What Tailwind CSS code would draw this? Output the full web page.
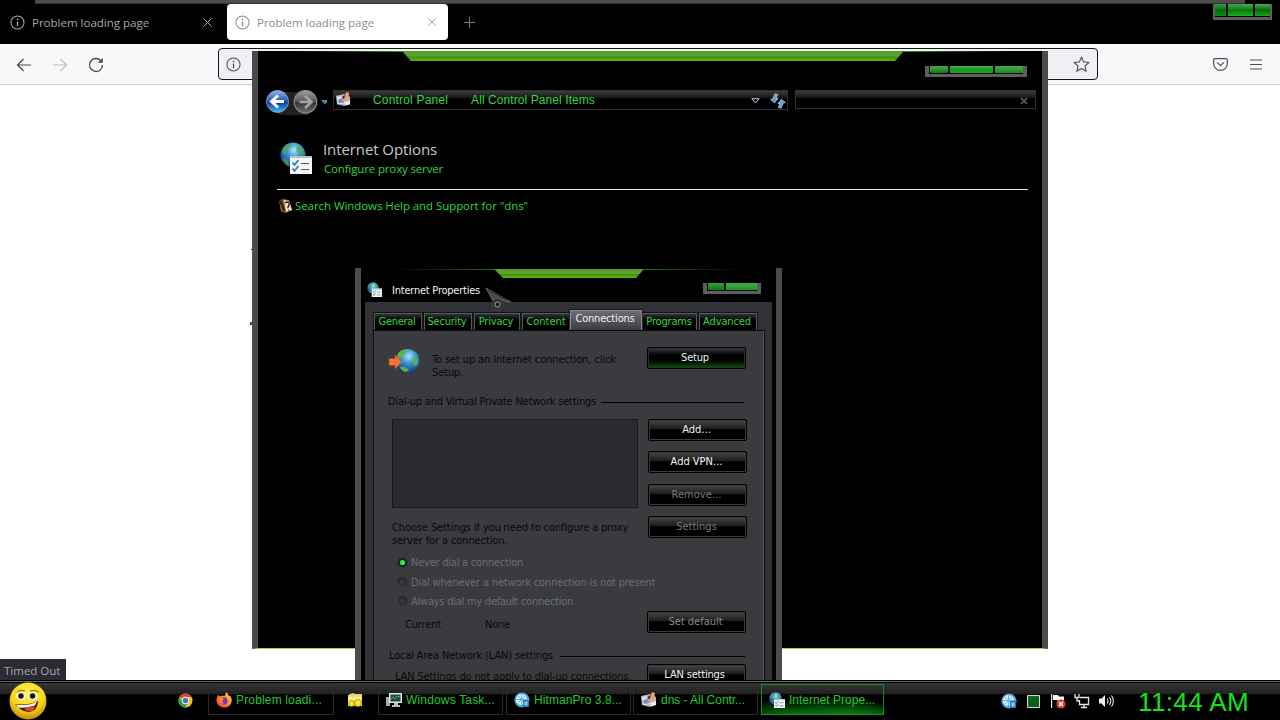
<!DOCTYPE html>
<html lang="en">
<head>
<meta charset="utf-8">
<title>Desktop</title>
<script src="https://cdn.jsdelivr.net/npm/@tailwindcss/browser@4"></script>
</head>
<body class="w-[1280px] h-[720px] overflow-hidden bg-black">
<svg class="absolute size-0">
  <defs>
    <radialGradient id="globe" cx=".55" cy=".3" r=".8"><stop offset="0" stop-color="#b5e4f8"/><stop offset=".35" stop-color="#3d9bd6"/><stop offset=".75" stop-color="#1c4c9c"/><stop offset="1" stop-color="#0b2758"/></radialGradient>
    <linearGradient id="blueBtn" x1="0" y1="0" x2="0" y2="1"><stop offset="0" stop-color="#8fb4e4"/><stop offset=".45" stop-color="#2b5dbb"/><stop offset=".55" stop-color="#123a9c"/><stop offset="1" stop-color="#38c4ff"/></linearGradient>
    <linearGradient id="grayBtn" x1="0" y1="0" x2="0" y2="1"><stop offset="0" stop-color="#a0a0a0"/><stop offset=".45" stop-color="#5c5c5c"/><stop offset=".55" stop-color="#363636"/><stop offset="1" stop-color="#6c6c6c"/></linearGradient>
    <linearGradient id="trim" x1="0" y1="0" x2="0" y2="1"><stop offset="0" stop-color="#4f9c25"/><stop offset=".5" stop-color="#5fa238"/><stop offset=".6" stop-color="#3f8f08"/><stop offset="1" stop-color="#58bd12"/></linearGradient>
    <radialGradient id="smile" cx=".5" cy=".3" r=".75"><stop offset="0" stop-color="#fff35a"/><stop offset=".6" stop-color="#f5d416"/><stop offset="1" stop-color="#b87e05"/></radialGradient>
    <linearGradient id="fox" x1="1" y1="0" x2="0" y2="1"><stop offset="0" stop-color="#ffe14a"/><stop offset=".5" stop-color="#ff8a1f"/><stop offset="1" stop-color="#f0245e"/></linearGradient>
    <symbol id="info" viewBox="0 0 16 16"><circle cx="8" cy="8" r="7" fill="none" stroke="currentColor" stroke-width="1.1"/><path d="M8 7v5" stroke="currentColor" stroke-width="1.4"/><circle cx="8" cy="4.6" r=".9" fill="currentColor"/></symbol>
    <symbol id="inetopt" viewBox="0 0 32 32"><circle cx="13" cy="13" r="12.5" fill="url(#globe)"/><path d="M2 8c3-5 7-7 9-6 2 2-1 4-3 5s-1 4-3 5-3-1-3-4zM17 3c4 1 6 4 7 8l-4 2-4-4zM3 17c4-1 6 2 6 7-3-1-5-4-6-7z" fill="#56a83c" opacity=".7"/><path d="M10 14h22v18H10z" fill="#f4f6f8"/><path d="M10 14h22v2H10z" fill="#b9c0c8"/><path d="M21 21.500h8M21 27.500h8" stroke="#555" stroke-width="1.200"/><path d="M12.500 20.500l2 2.500 4-5M12.500 26.500l2 2.500 4-5" fill="none" stroke="#1d7fae" stroke-width="1.700"/></symbol>
    <symbol id="cpl" viewBox="0 0 16 16"><path d="M0 4l9-2 6 3v8l-6 2-8-2z" fill="#b9b4b4"/><path d="M1 5l8-1 1 8-8 1z" fill="#dfe6f0"/><path d="M2 9l4-3 3 5-6 1z" fill="#8089b0"/><path d="M6 5l6-3 1 2-5 4z" fill="#4d3030"/><path d="M11 0l3 1-1 6-4 3-1-1z" fill="#f0a070"/><path d="M9 11l6-2v4l-5 1z" fill="#f3ece8"/></symbol>
    <symbol id="hit" viewBox="0 0 16 16"><circle cx="8" cy="8" r="7.600" fill="#4ea5dc"/><circle cx="7.500" cy="7.500" r="5.600" fill="#d9effb"/><path d="M7.500 2v11M2 7.500h11M3.600 3.600l8 8M11.500 3.500l-8 8" stroke="#69b3e2" stroke-width="1"/><path d="M9 8h6v7H9z" fill="#2477bd"/><path d="M10.500 9.500h3v4h-3z" fill="#8fd0f4"/></symbol>
  </defs>
</svg>

<div class="flex h-[720px] w-[1280px] flex-col">
  <main class="relative h-[680px] w-full overflow-hidden bg-white">

    <!-- Browser -->
    <section class="flex h-full flex-col">
      <div class="h-1 bg-black pr-[35px] pl-[35px]"><div class="h-full border-b border-[#333] bg-[#4d4d4d]"></div></div>
      <div class="flex h-10 bg-black font-['Open_Sans','Noto_Sans',sans-serif] text-[11.5px] tracking-[0px]">
        <div class="flex h-9 w-[227px] items-center pr-[15px] pl-[10px] text-[#a9a9a9]">
          <svg class="mr-[7px] size-[15px]"><use href="#info"/></svg>
          <span class="flex-1 pt-[2px] whitespace-nowrap">Problem loading page</span>
          <svg class="size-[9px]" viewBox="0 0 9 9"><path d="M.5.5l8 8M8.500.5l-8 8" stroke="#b5b5b5" stroke-width="1"/></svg>
        </div>
        <div class="flex h-9 w-[221px] items-center rounded bg-white pr-[12px] pl-[8px] text-[#8d8d8d]">
          <svg class="mr-[7px] size-[15px]"><use href="#info"/></svg>
          <span class="flex-1 pt-[2px] whitespace-nowrap">Problem loading page</span>
          <svg class="size-[8px]" viewBox="0 0 9 9"><path d="M.5.5l8 8M8.500.5l-8 8" stroke="#9a9a9a" stroke-width="1"/></svg>
        </div>
        <div class="flex h-9 items-center pl-[16px]"><svg class="size-[11px]" viewBox="0 0 11 11"><path d="M5.500 0v11M0 5.500h11" stroke="#7b7b7b"/></svg></div>
      </div>
      <div class="flex h-[41px] items-center border-b border-[#cfcfd2] bg-[#f9f9fb] text-[#4a4a52]">
        <svg class="mt-px ml-[16px] h-[14px] w-[15px]" viewBox="0 0 15 14" fill="none" stroke="#45454d" stroke-width="1.200"><path d="M15 7H1.500M7.500 1l-6 6 6 6"/></svg>
        <svg class="mt-px ml-[22px] h-[14px] w-[15px]" viewBox="0 0 15 14" fill="none" stroke="#bdbdc0" stroke-width="1.200"><path d="M0 7h13.500M7.500 1l6 6-6 6"/></svg>
        <svg class="mt-px ml-[20px] size-[16px]" viewBox="0 0 16 16" fill="none" stroke="#45454d" stroke-width="1.300"><path d="M12.800 3.600A6.500 6.500 0 1 0 14.500 8"/><path d="M14.800.8v5h-5z" fill="#45454d" stroke="none"/></svg>
        <div class="ml-[114px] flex h-8 w-[880px] items-center justify-between rounded border border-[#15141a] bg-[#f0f0f4] px-[7px]">
          <svg class="size-[15px]"><use href="#info"/></svg>
          <svg class="size-[17px]" viewBox="0 0 16 16" fill="none" stroke="#55555d" stroke-width="1.100" stroke-linejoin="round"><path d="M8 1l2 4.600 5 .5-3.800 3.300 1.200 5L8 11.700l-4.400 2.700 1.200-5L1 6.100l5-.5z"/></svg>
        </div>
        <svg class="ml-[115px] h-[13px] w-[15px]" viewBox="0 0 15 13" fill="none" stroke="#4f4f57" stroke-width="1.200" stroke-linejoin="round" stroke-linecap="round"><path d="M2 .6h11q1.400 0 1.400 1.400v3.500a6.900 6.900 0 0 1-13.800 0V2Q.6.600 2 .6zM4.300 4.600l3.200 3 3.200-3"/></svg>
        <svg class="ml-[22px] h-[11px] w-[12px]" viewBox="0 0 12 11"><path d="M0 1h12M0 5.500h12M0 10h12" stroke="#4f4f57" stroke-width="1.100"/></svg>
      </div>
      <div class="flex flex-1 items-end bg-white">
        <div class="flex h-[21px] w-[66px] items-center bg-[#2b2b33] pt-[2px] pl-1 font-['Open_Sans','Noto_Sans',sans-serif] text-[11.5px] text-[#a5a5a8]">Timed Out</div>
      </div>
    </section>
    <i class="absolute top-[249px] left-[251px] h-px w-1 bg-[#333]"></i>
    <i class="absolute top-[322px] left-[250px] h-[3px] w-1 bg-[#444]"></i>

    <!-- Browser caption buttons -->
    <div class="absolute top-[4px] left-[1213px] flex h-[16px] w-[59px] gap-[2px] border-x-2 border-b-[3px] border-[#5e5e5e] bg-black pb-px">
      <i class="w-[11px] bg-linear-to-b from-[#3f9a45] via-[#036b09] to-[#0a8f12]"></i>
      <i class="flex-1 bg-linear-to-b from-[#4aa850] via-[#047a0a] to-[#17b31d]"></i>
      <i class="w-[15px] bg-linear-to-b from-[#4aa850] via-[#036b09] to-[#17a31d]"></i>
    </div>

    <!-- Control Panel window -->
    <section class="absolute top-[51px] left-[252px] flex h-[598px] w-[796px] flex-col border-x-[6px] border-b border-x-[#4b4b4b] border-b-[#b8cf3a] bg-black">
      <div class="flex h-[39px] justify-between">
        <div class="h-px w-[144px] bg-linear-to-r from-black to-[#3f8f20]"></div>
        <svg class="h-[10px] w-[502px]" viewBox="0 0 502 10" preserveAspectRatio="none"><path d="M0 0h502l-9 10H9z" fill="url(#trim)"/></svg>
        <div class="h-px w-[138px] bg-linear-to-l from-black to-[#3f8f20]"></div>
      </div>
      <div class="flex h-[22px] items-start pl-[8px]">
        <svg class="h-[25px] w-[61px] shrink-0" viewBox="0 0 61 25"><path d="M12 2h30l6 10-6 13H12z" fill="#222"/><circle cx="11.500" cy="11.500" r="11" fill="url(#blueBtn)" stroke="#8fa8cc" stroke-width=".8"/><path d="M12 5.500l-6.500 6 6.500 6M6 11.500h12" fill="none" stroke="#fff" stroke-width="3"/><circle cx="39.500" cy="11.800" r="11.300" fill="url(#grayBtn)" stroke="#8a8a8a" stroke-width="1.200"/><path d="M39 6l6.500 6-6.500 6M33.500 12h11" fill="none" stroke="#a0a3a3" stroke-width="2.600"/><path d="M55 10h8l-4 4.500z" fill="#3a90b8"/></svg>
        <div class="ml-[6px] flex h-[20px] w-[455px] items-start border border-[#2e2e2e] bg-linear-to-b from-[#3c3c3c] from-0% via-[#151515] via-40% to-black to-45% font-['Liberation_Sans',Arial,sans-serif] text-[12px] leading-[18px] text-[#2fd83c]">
          <svg class="mt-px ml-[2px] size-[15px]"><use href="#cpl"/></svg>
          <span class="ml-[22px] tracking-[0.18px]">Control Panel</span>
          <span class="ml-[23px] tracking-[0.08px]">All Control Panel Items</span>
          <svg class="mt-[7px] ml-auto h-[6px] w-[9px]" viewBox="0 0 9 6"><path d="M.8.700h7.400L4.500 5z" fill="#111" stroke="#c3bdf0"/></svg>
          <svg class="mt-[2px] mr-px ml-[10px] size-[16px]" viewBox="0 0 16 16" fill="#5b9bd0" stroke="#b9d5ec" stroke-width=".8" stroke-linejoin="round"><path d="M5 .8l2.800.7-2 4H8L4.500 9.800.6 6.300h2z"/><path d="M11 15.200l-2.800-.7 2-4H8l3.500-4.300 3.900 3.500h-2z"/></svg>
        </div>
        <div class="ml-[7px] flex h-[19px] w-[241px] items-center justify-end border border-[#333] bg-linear-to-b from-[#3c3c3c] from-0% via-[#151515] via-40% to-black to-45% pr-[7px]">
          <svg class="mt-[3px] size-[8px]" viewBox="0 0 8 8"><path d="M1 1l6 6M7 1L1 7" stroke="#59617f" stroke-width="1.700"/></svg>
        </div>
      </div>
      <div class="mt-[28px] flex h-[49px] pl-[22px] font-['Open_Sans','Noto_Sans',sans-serif]">
        <svg class="mt-[2px] size-[32px]"><use href="#inetopt"/></svg>
        <div class="ml-[11px]">
          <h1 class="h-[20px] text-[15px] leading-[18px] tracking-[-0.09px] text-[#c9c9c9]">Internet Options</h1>
          <a class="ml-px block text-[11.5px] leading-[17px] tracking-[-0.15px] text-[#2fd83c]">Configure proxy server</a>
        </div>
      </div>
      <div class="mr-[14px] ml-[19px] h-px bg-[#e4e4e4]"></div>
      <div class="mt-[8px] flex items-center pl-[21px] font-['Open_Sans','Noto_Sans',sans-serif] text-[11.5px] leading-4 tracking-[-0.07px] text-[#2fd83c]">
        <svg class="h-[14px] w-[14px]" viewBox="0 0 14 14"><path d="M0 2l4-2 6 1 3 10-7 3-4-2z" fill="#a8662a"/><path d="M0 2l3-1 4 12-3-1z" fill="#3b2415"/><path d="M5 1l5 1 3 9-6 2z" fill="#f2dfc4"/><path d="M6 4q3-2 4 0t-1 4l.3 1M9.800 10.500v1" fill="none" stroke="#222" stroke-width="1.500"/></svg>
        <a class="ml-[2px]">Search Windows Help and Support for "dns"</a>
      </div>
    </section>
    <!-- Control Panel caption buttons -->
    <div class="absolute top-[66px] left-[925px] flex h-[11px] w-[102px] gap-[2px] border-x-4 border-b-[3px] border-[#5e5e5e] bg-black pb-px pl-px">
      <i class="w-[18px] bg-linear-to-b from-[#4aa850] to-[#057a0c]"></i>
      <i class="flex-1 bg-linear-to-b from-[#4aa850] via-[#149e1c] to-[#12a81a]"></i>
      <i class="w-[28px] bg-linear-to-b from-[#4aa850] to-[#0a9011]"></i>
    </div>

    <!-- Internet Properties dialog -->
    <section class="absolute top-[268px] left-[355px] flex h-[440px] w-[427px] flex-col border-x-[6px] border-[#4b4b4b] bg-black font-['DejaVu_Sans_Condensed','DejaVu_Sans',sans-serif] text-[11px] tracking-[-0.18px]">
      <div class="flex h-[12px] justify-between">
        <div class="mt-px h-px w-[133px] bg-linear-to-r from-black to-[#2c6a14]"></div>
        <svg class="h-[10px] w-[150px]" viewBox="0 0 150 10"><path d="M0 1h150l-8 9H9z" fill="url(#trim)"/></svg>
        <div class="mt-px h-px w-[132px] bg-linear-to-l from-black to-[#2c6a14]"></div>
      </div>
      <div class="flex h-[22px] items-start pr-[15px] pl-[6px]">
        <svg class="mt-[2px] size-[15px]"><use href="#inetopt"/></svg>
        <h2 class="mt-[3px] ml-[10px] leading-4 tracking-[-0.23px] text-[#f0f0f0]">Internet Properties</h2>
        <div class="mt-[3px] ml-auto flex h-[11px] w-[58px] gap-[2px] border-x-4 border-b-[3px] border-[#5e5e5e] bg-black pb-px pl-px">
          <i class="w-[16px] bg-linear-to-b from-[#3b9a42] to-[#057a0c]"></i>
          <i class="flex-1 bg-linear-to-b from-[#4aa850] to-[#139a1a]"></i>
        </div>
      </div>
      <div class="mx-[4px] flex flex-1 flex-col bg-[#303236] px-[8px]">
        <div class="flex h-[28px] w-[392px] shrink-0 items-end text-[#2fd83c]">
          <span class="ml-px flex h-[17px] w-[48px] shrink-0 items-center justify-center border border-b-0 border-[#5a5a5e] bg-linear-to-b from-[#33343a] to-black to-60% pr-[2px] tracking-[-0.29px] outline outline-black/60">General</span>
          <span class="ml-[2px] flex h-[17px] w-[48px] shrink-0 items-center justify-center border border-b-0 border-[#5a5a5e] bg-linear-to-b from-[#33343a] to-black to-60% pr-[2px] tracking-[-0.21px] outline outline-black/60">Security</span>
          <span class="ml-[2px] flex h-[17px] w-[46px] shrink-0 items-center justify-center border border-b-0 border-[#5a5a5e] bg-linear-to-b from-[#33343a] to-black to-60% pr-[2px] outline outline-black/60">Privacy</span>
          <span class="ml-[2px] flex h-[17px] w-[48px] shrink-0 items-center justify-center border border-b-0 border-[#5a5a5e] bg-linear-to-b from-[#33343a] to-black to-60% tracking-[-0.05px] outline outline-black/60">Content</span>
          <span class="z-10 flex h-[20px] w-[72px] shrink-0 items-start justify-center border border-b-0 border-[#8a8a90] bg-linear-to-b from-[#6c6c74] to-[#3b3d41] pr-[2px] text-[#f0f0f0] outline outline-black/50">Connections</span>
          <span class="flex h-[17px] w-[55px] shrink-0 items-center justify-center border border-b-0 border-[#5a5a5e] bg-linear-to-b from-[#33343a] to-black to-60% pr-px outline outline-black/60">Programs</span>
          <span class="ml-[2px] flex h-[17px] w-[58px] shrink-0 items-center justify-center border border-b-0 border-[#5a5a5e] bg-linear-to-b from-[#33343a] to-black to-60% pr-[2px] tracking-[-0.11px] outline outline-black/60">Advanced</span>
        </div>
        <div class="flex w-[392px] flex-1 flex-col border border-[#0c0c0d] bg-[#393b3f] pr-[17px] pl-[14px] text-[#08080a] shadow-[inset_-1px_0_0_#55565a]">
          <div class="flex h-[63px] shrink-0 items-start pt-[16px]">
            <svg class="mt-[1px] h-[27px] w-[32px]" viewBox="0 0 32 27"><circle cx="19.500" cy="13" r="12" fill="url(#globe)"/><path d="M10 5c4-4 8-4 9-3 0 3-3 3-4 6s-4 3-6 2zM27 8c3 2 4 6 2 9l-3 1-1-5zM12 19c4-1 8 0 9 4-4 2-8 0-9-4z" fill="#63b53a" opacity=".9"/><path d="M1 10.500h6V7l7 7-7 7v-3.500H1z" fill="#f2703a" stroke="#b54418" stroke-width=".6"/></svg>
            <p class="mt-[6px] ml-[12px] w-[215px] leading-[13px] tracking-[-0.11px]">To set up an Internet connection, click<br>Setup.</p>
            <button class="h-[22px] w-[99px] rounded-[2px] border border-black bg-linear-to-b from-[#3c3c3c] via-black via-50% to-[#0d5c12] to-100% pr-[3px] text-[#f2f2f2] shadow-[inset_0_0_0_1px_#2c2f2c]">Setup</button>
          </div>
          <div class="flex h-[16px] shrink-0 items-center gap-[5px] pr-[3px] tracking-[-0.21px]"><span>Dial-up and Virtual Private Network settings</span><i class="h-px flex-1 bg-black"></i></div>
          <div class="mt-[9px] flex h-[119px] shrink-0 pl-[4px]">
            <div class="flex flex-col">
              <div class="h-[89px] w-[246px] shrink-0 border border-[#18191a] bg-[#2b2c2f]"></div>
              <p class="mt-[13px] w-[250px] shrink-0 leading-[13px] tracking-[-0.11px] whitespace-nowrap">Choose Settings if you need to configure a proxy<br>server for a connection.</p>
            </div>
            <div class="ml-[6px] flex flex-col text-[#f2f2f2]">
              <button class="h-[22px] w-[99px] rounded-[2px] border border-black bg-linear-to-b from-[#484848] via-[#1c1c1c] via-45% to-black to-50% pt-px pr-[2px] tracking-[0px] shadow-[inset_0_0_0_1px_#3a3a3a]">Add...</button>
              <button class="mt-[10px] h-[22px] w-[99px] rounded-[2px] border border-black bg-linear-to-b from-[#484848] via-[#1c1c1c] via-45% to-black to-50% pt-px pr-[2px] tracking-[0px] shadow-[inset_0_0_0_1px_#3a3a3a]">Add VPN...</button>
              <button class="mt-[11px] h-[22px] w-[99px] rounded-[2px] border border-black bg-linear-to-b from-[#484848] via-[#1c1c1c] via-45% to-black to-50% pt-px pr-[2px] tracking-[0.05px] text-[#77777a] shadow-[inset_0_0_0_1px_#3a3a3a]">Remove...</button>
              <button class="mt-[10px] h-[22px] w-[99px] rounded-[2px] border border-black bg-linear-to-b from-[#484848] via-[#1c1c1c] via-45% to-black to-50% pt-px pr-[2px] tracking-[0px] text-[#77777a] shadow-[inset_0_0_0_1px_#3a3a3a]">Settings</button>
            </div>
          </div>
          <div class="mt-[15px] flex shrink-0 flex-col pl-[9px] text-[#6c6e71]">
            <label class="flex h-[20px] items-center gap-[3px] tracking-[-0.23px]"><svg class="mb-px size-[11px]" viewBox="0 0 11 11"><circle cx="5.500" cy="5.500" r="5" fill="#202224"/><circle cx="5.500" cy="5.500" r="2.600" fill="#2ee85a"/></svg>Never dial a connection</label>
            <label class="flex h-[20px] items-center gap-[3px] tracking-[-0.17px]"><svg class="mb-[3px] size-[11px]" viewBox="0 0 11 11"><circle cx="5.500" cy="5.500" r="4.800" fill="#27292b"/><circle cx="5.500" cy="6.500" r="3" fill="#35373a"/></svg>Dial whenever a network connection is not present</label>
            <label class="flex h-[18px] items-center gap-[3px] tracking-[-0.24px]"><svg class="mb-[3px] size-[11px]" viewBox="0 0 11 11"><circle cx="5.500" cy="5.500" r="4.800" fill="#27292b"/><circle cx="5.500" cy="6.500" r="3" fill="#35373a"/></svg>Always dial my default connection</label>
          </div>
          <div class="flex h-[37px] shrink-0 items-start pl-[17px]">
            <span class="mt-[6px] w-[80px]">Current</span><span class="mt-[6px] flex-1">None</span>
            <button class="mr-px h-[22px] w-[99px] rounded-[2px] border border-black bg-linear-to-b from-[#484848] via-[#1c1c1c] via-45% to-black to-50% pr-[2px] tracking-[0px] text-[#8a8a8c] shadow-[inset_0_0_0_1px_#3a3a3a]">Set default</button>
          </div>
          <div class="flex h-[16px] shrink-0 items-center gap-[7px] pr-[2px] pl-px"><span class="tracking-[-0.16px]">Local Area Network (LAN) settings</span><i class="h-px flex-1 bg-black"></i></div>
          <div class="flex items-start pl-[7px]">
            <span class="mt-[5px] flex-1 whitespace-nowrap">LAN Settings do not apply to dial-up connections.</span>
            <button class="mr-px h-[22px] w-[99px] rounded-[2px] border border-black bg-linear-to-b from-[#484848] via-[#1c1c1c] via-45% to-black to-50% pr-[4px] text-[#f2f2f2] shadow-[inset_0_0_0_1px_#3a3a3a]">LAN settings</button>
          </div>
        </div>
      </div>
    </section>

    <!-- Mouse pointer -->
    <svg class="absolute top-[287px] left-[485px] h-[26px] w-[28px]" viewBox="0 0 28 26"><path d="M1 1l25 14-8-1a6.500 6.500 0 0 0-9 2z" fill="#4a4f4b" stroke="#6d746e" stroke-width=".8"/><path d="M3 3l19 10" stroke="#252825"/><circle cx="12.500" cy="17.500" r="5.500" fill="#222523" stroke="#4c514d"/><circle cx="12.500" cy="17.500" r="2.700" fill="#1a1c1a" stroke="#7f867f" stroke-width="1.300"/></svg>
  </main>

  <!-- Taskbar -->
  <footer class="flex h-10 w-full items-start border-t border-black bg-linear-to-b from-[#3a3a3a] from-0% via-[#222] via-32% to-black to-37% font-['Liberation_Sans',Arial,sans-serif] text-[12px] text-[#22c932] shadow-[inset_0_1px_0_#6a6a6a,inset_0_2px_0_#000]">
    <div class="w-[178px] pl-[9px]">
      <svg class="mt-px h-[38px] w-[38px]" viewBox="0 0 38 38"><circle cx="19" cy="19" r="18.500" fill="url(#smile)"/><path d="M8 10q3-3 8-1M21 9q5-2 9 1" fill="none" stroke="#8a6407"/><ellipse cx="12" cy="14" rx="5" ry="4" fill="#f1eedd"/><ellipse cx="24" cy="14" rx="5" ry="4" fill="#f1eedd"/><circle cx="12" cy="14" r="2.700" fill="#161616"/><circle cx="23.500" cy="14" r="2.700" fill="#161616"/><path d="M6 22q12 2 23-3 0 10-9 11-9-1-14-8z" fill="#4a1608"/><path d="M7 22.500q12 2 21-3l-2 4q-9 3-17 2z" fill="#f7f2e4"/><path d="M15 27q6-4 11-2l-2 4q-5 1-9-2z" fill="#d8483a"/></svg>
    </div>
    <svg class="mt-[12px] size-[15px]" viewBox="0 0 16 16"><circle cx="8" cy="8" r="7.500" fill="#f3c41c"/><path d="M8 8L1.500 4.300A7.500 7.500 0 0 1 14.500 4.300H8z" fill="#dd4434"/><path d="M1.500 4.300A7.500 7.500 0 0 0 7.500 15.500L11 9.500 5 10z" fill="#2b9d53"/><circle cx="8" cy="8" r="3.900" fill="#fff"/><circle cx="8" cy="8" r="3" fill="#3b76d8"/></svg>
    <div class="mt-[3px] ml-[15px] flex h-[31px] w-[126px] items-center border border-[#2c2c2c] pl-[7px]">
      <svg class="mr-[4px] size-[16px]" viewBox="0 0 16 16"><path d="M10 0q2 1 2.500 3.500 2-.2 3 3 1 5-2.500 7.500T5 15Q0 12.500.500 7 1 4 3 2.500q0 1.500 1 2Q7 3 8 4q2-1 2-4z" fill="url(#fox)"/><circle cx="8" cy="8.800" r="3.600" fill="#7438b8"/><path d="M3 7q3-2 5 0l-2 2q0 2 3 2-4 2-6-1z" fill="#ff8a1f"/></svg>
      <span class="tracking-[0.16px] whitespace-nowrap">Problem loadi...</span>
    </div>
    <svg class="mt-[12px] ml-[13px] h-[15px] w-[16px]" viewBox="0 0 16 15"><path d="M1 2l5-2 2 1h7v12H1z" fill="#e8db6d"/><path d="M1 4h14v9H1z" fill="#f5ef9a"/><circle cx="4.500" cy="10.500" r="3" fill="#ffe81c" stroke="#95830a" stroke-width=".8"/><circle cx="11" cy="10" r="3.500" fill="#ffe81c" stroke="#95830a" stroke-width=".8"/></svg>
    <div class="mt-[3px] ml-[15px] flex h-[31px] w-[125px] items-center border border-[#2c2c2c] pl-[7px]">
      <svg class="mr-[4px] size-[16px]" viewBox="0 0 16 16"><path d="M0 5h4v9H0z" fill="#a9b0ac"/><path d="M3 1h13v10H3z" fill="#dfe4e0"/><path d="M4.500 2.500h10v7h-10z" fill="#1f4a40"/><path d="M5 7l2-2 2 2 2-3 3 1" fill="none" stroke="#5fc08c" stroke-width=".8"/><path d="M8 11h4v2h2v2H6v-2h2z" fill="#b9bfbb"/></svg>
      <span class="tracking-[0.17px] whitespace-nowrap">Windows Task...</span>
    </div>
    <div class="mt-[3px] ml-[3px] flex h-[31px] w-[125px] items-center border border-[#2c2c2c] pl-[7px]">
      <svg class="mr-[4px] size-[16px]"><use href="#hit"/></svg><span class="tracking-[0.08px] whitespace-nowrap">HitmanPro 3.8...</span>
    </div>
    <div class="mt-[3px] ml-[2px] flex h-[31px] w-[125px] items-center border border-[#2c2c2c] pl-[7px]">
      <svg class="mr-[4px] size-[16px]"><use href="#cpl"/></svg><span class="tracking-[-0.04px] whitespace-nowrap">dns - All Contr...</span>
    </div>
    <div class="mt-[3px] ml-[3px] flex h-[31px] w-[123px] items-center border border-[#1a8a22] bg-[radial-gradient(ellipse_at_20%_125%,#0a9a12_0%,transparent_45%),radial-gradient(ellipse_at_65%_125%,#0aa012_0%,transparent_50%),radial-gradient(ellipse_at_100%_120%,#0a7a12_0%,transparent_35%)] pl-[7px]">
      <svg class="mr-[4px] size-[16px]"><use href="#inetopt"/></svg><span class="whitespace-nowrap">Internet Prope...</span>
    </div>
    <div class="mt-[12px] ml-[117px] flex h-[16px] items-center">
      <svg class="size-[16px]"><use href="#hit"/></svg>
      <svg class="ml-[10px] size-[13px]" viewBox="0 0 13 13"><path d="M.5.500h12v12H.500z" fill="#148a30" stroke="#cfd8cf"/><path d="M3 1v11M5 1v11M7 1v11M9 1v11M11 1v11M1 3h11M1 5h11M1 7h11M1 9h11M1 11h11" stroke="#033a10" stroke-width=".6"/></svg>
      <svg class="ml-[11px] h-[15px] w-[15px]" viewBox="0 0 15 15"><path d="M.6 0v14" stroke="#e8e8e8" stroke-width="1.200"/><path d="M2 1h5l1 1.500h5V7H7L6 6H2z" fill="#f4f4f4"/><circle cx="10" cy="10" r="4.600" fill="#d93a28"/><path d="M8 8l4 4M12 8l-4 4" stroke="#fff" stroke-width="1.500"/></svg>
      <svg class="ml-[8px] h-[15px] w-[16px]" viewBox="0 0 16 15" fill="none" stroke="#e6e6e6" stroke-width="1.300"><path d="M6 3.500h8.500v7H5.500V6M7 13.500h6M10 10.500v3M1 0v3.500h4V0M3 3.500V7h2"/></svg>
      <svg class="ml-[9px] h-[14px] w-[15px]" viewBox="0 0 15 14" fill="none" stroke="#e6e6e6" stroke-width="1.100"><path d="M0 4.500h2.500L6 1v12L2.500 9.500H0z" fill="#eee" stroke="none"/><path d="M8 4.500q2 2.500 0 5M10.300 3q3 4 0 8M12.500 1.500q3.800 5.500 0 11"/></svg>
    </div>
    <time class="mt-[6px] ml-[24px] text-[26px] leading-[30px] tracking-[0.38px] whitespace-nowrap text-[#12e41c]">11:44 AM</time>
  </footer>
</div>
</body>
</html>
